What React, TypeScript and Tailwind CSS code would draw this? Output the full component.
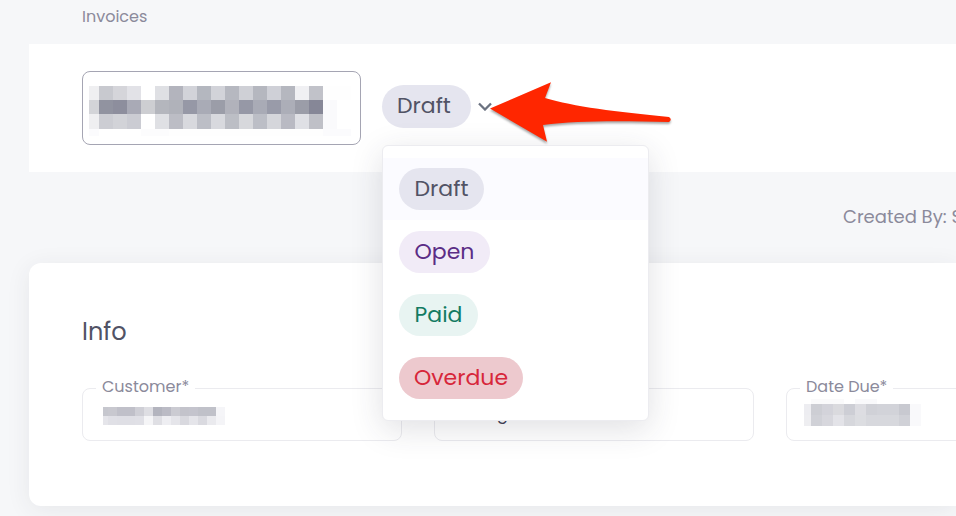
import { clsx } from "clsx";
import type { ReactNode } from "react";

const STATUSES = [
  { label: "Draft", width: "w-[85px]", color: "bg-[#e5e5ef] text-[#515365]" },
  { label: "Open", width: "w-[91px]", color: "bg-[#f1ebf7] text-[#5b2d86]" },
  { label: "Paid", width: "w-[79px]", color: "bg-[#e8f4f2] text-[#137b62]" },
  { label: "Overdue", width: "w-[124px]", color: "bg-[#edc9ce] text-[#d7263a]" },
];

type MosaicRow = { y: number; height: number; cells: string[] };

const TITLE_MOSAIC: MosaicRow[] = [
  {
    y: 0,
    height: 14,
    cells: ["#efeff1", "#c8c9cf", "#d5d5da", "#e2e2e7", "#ffffff", "#dfe0e4", "#b3b4bd", "#d2d3d9", "#b4b7bf", "#d2d3d9", "#b6b8c0", "#cfd0d6", "#b5b7bf", "#cfd0d7", "#b5b7bf", "#f0f0f3", "#c1c2c9", "#fefefe", "#fefefe"],
  },
  {
    y: 14,
    height: 14,
    cells: ["#d3d4d8", "#9193a0", "#8d8e9d", "#a9aab6", "#cdced2", "#b4b6bd", "#b0b2ba", "#9698a6", "#a9abb6", "#9b9da8", "#b1b2bb", "#9698a6", "#a9abb6", "#999ba9", "#acaeb8", "#9b9da8", "#868797", "#fafafc", "#ffffff"],
  },
  {
    y: 28,
    height: 15,
    cells: ["#efeff1", "#cccdd3", "#d2d3d8", "#cbccd3", "#ffffff", "#dfe0e4", "#bcbdc5", "#d8d9de", "#bcbec6", "#d8d9de", "#bcbec5", "#d7d8dc", "#bcbec6", "#d5d6db", "#b9bac3", "#dfe0e5", "#bfc0c7", "#fafafc", "#ffffff"],
  },
  {
    y: 43,
    height: 7,
    cells: ["#fbfbfd", "#ffffff", "#ffffff", "#ffffff", "#fcfcfd", "#fcfcfd", "#fefefe", "#fefefe", "#fefefe", "#fefefe", "#fefefe", "#fefefe", "#fefefe", "#fefefe", "#fefefe", "#fefefe", "#fefefe", "#fbfbfd", "#fbfbfd"],
  },
];

const CUSTOMER_MOSAIC: MosaicRow[] = [
  {
    y: 0,
    height: 9,
    cells: ["#c6c7ce", "#c8c8cf", "#c0c0c9", "#c0c0c9", "#cfcfd6", "#dedee3", "#b3b4be", "#bbbbc5", "#cbcbd2", "#c3c3cb", "#c4c4cd", "#c0c1c9", "#c0c1c9", "#f5f5f8"],
  },
  {
    y: 9,
    height: 9,
    cells: ["#e5e5ea", "#e0e0e6", "#dfdfe5", "#dfdfe5", "#e0e0e6", "#f5f5f7", "#dfdfe4", "#eeeef2", "#e5e5ea", "#d9d9df", "#e5e5ea", "#dadae0", "#eaeaee", "#f4f4f7"],
  },
];

const DATE_MOSAIC: MosaicRow[] = [
  {
    y: 0,
    height: 5,
    cells: ["#ffffff", "#fafafb", "#fafafb", "#fafafb", "#ffffff", "#f9f9fb", "#f9f9fb", "#ffffff", "#ffffff", "#ffffff", "#ffffff"],
  },
  {
    y: 5,
    height: 11,
    cells: ["#ededf1", "#cdced4", "#d3d3da", "#dadade", "#cdced5", "#dddde2", "#d0d1d7", "#d2d3d9", "#d2d3d9", "#c8c9d0", "#f9f9fb"],
  },
  {
    y: 16,
    height: 11,
    cells: ["#eeeef1", "#d0d1d7", "#d7d7dd", "#e3e3e8", "#d6d7dc", "#dcdde1", "#d7d8dd", "#d7d8dd", "#d7d8dd", "#d0d1d7", "#f9f9fb"],
  },
];

function Mosaic({ rows, first, cell, className }: { rows: MosaicRow[]; first: number; cell: number; className?: string }) {
  const width = first + (rows[0].cells.length - 1) * cell;
  const last = rows[rows.length - 1];
  return (
    <svg
      width={width}
      height={last.y + last.height}
      shapeRendering="crispEdges"
      aria-hidden="true"
      className={clsx("pointer-events-none absolute", className)}
    >
      {rows.map((row) =>
        row.cells.map((fill, i) => (
          <rect
            key={`${row.y}-${i}`}
            x={i === 0 ? 0 : first + (i - 1) * cell}
            y={row.y}
            width={i === 0 ? first : cell}
            height={row.height}
            fill={fill}
          />
        ))
      )}
    </svg>
  );
}

function Field({ id, label, value, children }: { id: string; label?: string; value?: string; children?: ReactNode }) {
  return (
    <div className="relative w-80 shrink-0">
      {label && (
        <label htmlFor={id} className="absolute -top-[13px] left-3.5 bg-white px-1.5 text-base leading-6 text-[#8b8a9b]">
          {label}
        </label>
      )}
      <input
        id={id}
        aria-label={label ? undefined : "Email"}
        defaultValue={value}
        className="block h-[53px] w-full rounded-lg border border-[#ebebef] bg-white px-[62px] text-base text-[#3f4054] outline-none"
      />
      {children}
    </div>
  );
}

function StatusMenu() {
  return (
    <ul
      role="listbox"
      aria-label="Status"
      className="absolute top-full left-0 z-10 mt-[17px] flex w-[267px] flex-col gap-px rounded-md border border-[#ececf0] bg-white pt-3 pb-[11px] shadow-[0_8px_32px_rgba(50,50,70,0.15)]"
    >
      {STATUSES.map((status, i) => (
        <li key={status.label} role="option" aria-selected={i === 0}>
          <button className={clsx("flex h-[62px] w-full items-center px-4", i === 0 && "bg-[#fbfbff]")}>
            <span
              className={clsx(
                "flex h-[42px] items-center justify-center rounded-full text-[22px] leading-8",
                status.width,
                status.color
              )}
            >
              {status.label}
            </span>
          </button>
        </li>
      ))}
    </ul>
  );
}

function Arrow() {
  return (
    <svg
      width="190"
      height="70"
      viewBox="0 0 190 70"
      aria-hidden="true"
      className="pointer-events-none absolute -top-1.5 left-[103px] z-20 drop-shadow-[0_2px_1px_rgba(0,0,0,0.35)]"
    >
      <path
        d="M5 29.5 L66 3.2 L60 19 C88 27.500 132 33 184 38 Q187.500 40.300 184 43 C135 42 92 41.500 58 46 L62 62.700 Z"
        fill="#ff2600"
      />
    </svg>
  );
}

export default function App() {
  return (
    <div className="min-h-screen overflow-hidden bg-[#f6f7f9] pl-[29px] font-[Poppins,Inter,sans-serif] text-[#515365]">
      <nav className="flex h-11 items-start pt-[5px] pl-[53px]">
        <a href="#invoices" className="text-base leading-6 text-[#8b8a9b]">
          Invoices
        </a>
      </nav>

      <header className="flex h-32 items-start bg-white pt-[27px] pl-[53px]">
        <div className="relative w-[279px] shrink-0">
          <input
            aria-label="Invoice number"
            className="block h-[74px] w-full rounded-lg border border-[#a5a5b3] bg-white outline-none"
          />
          <Mosaic rows={TITLE_MOSAIC} first={10} cell={14} className="top-[15px] left-[7px]" />
        </div>
        <div className="relative mt-3.5 ml-[21px]">
          <button aria-haspopup="listbox" aria-expanded="true" className="flex items-center gap-[7px]">
            <span className="flex h-[43px] w-[89px] items-start rounded-full bg-[#e5e5ef] pt-[5px] pl-[15px] text-[22px] leading-8">
              Draft
            </span>
            <svg width="14" height="9" viewBox="0 0 14 9" fill="none" aria-hidden="true">
              <path d="M1 1.500 L7 7.500 L13 1.500" stroke="#6b7280" strokeWidth="2.300" />
            </svg>
          </button>
          <StatusMenu />
          <Arrow />
        </div>
      </header>

      <div className="flex h-[91px] justify-end pt-[31px]">
        <p className="w-[113px] text-lg leading-7 whitespace-nowrap text-[#8b8a9b]">Created By: S</p>
      </div>

      <section className="h-[243px] rounded-l-xl bg-white pt-[51px] pl-[53px] shadow-[0_4px_24px_rgba(50,50,60,0.08)]">
        <h2 className="text-2xl leading-9">Info</h2>
        <div className="mt-[38px] flex gap-8">
          <Field id="customer" label="Customer*">
            <Mosaic rows={CUSTOMER_MOSAIC} first={5} cell={9} className="top-[19px] left-[21px]" />
          </Field>
          <Field id="email" value="g" />
          <Field id="date-due" label="Date Due*">
            <Mosaic rows={DATE_MOSAIC} first={7} cell={11} className="top-[11px] left-[18px]" />
          </Field>
        </div>
      </section>
    </div>
  );
}
